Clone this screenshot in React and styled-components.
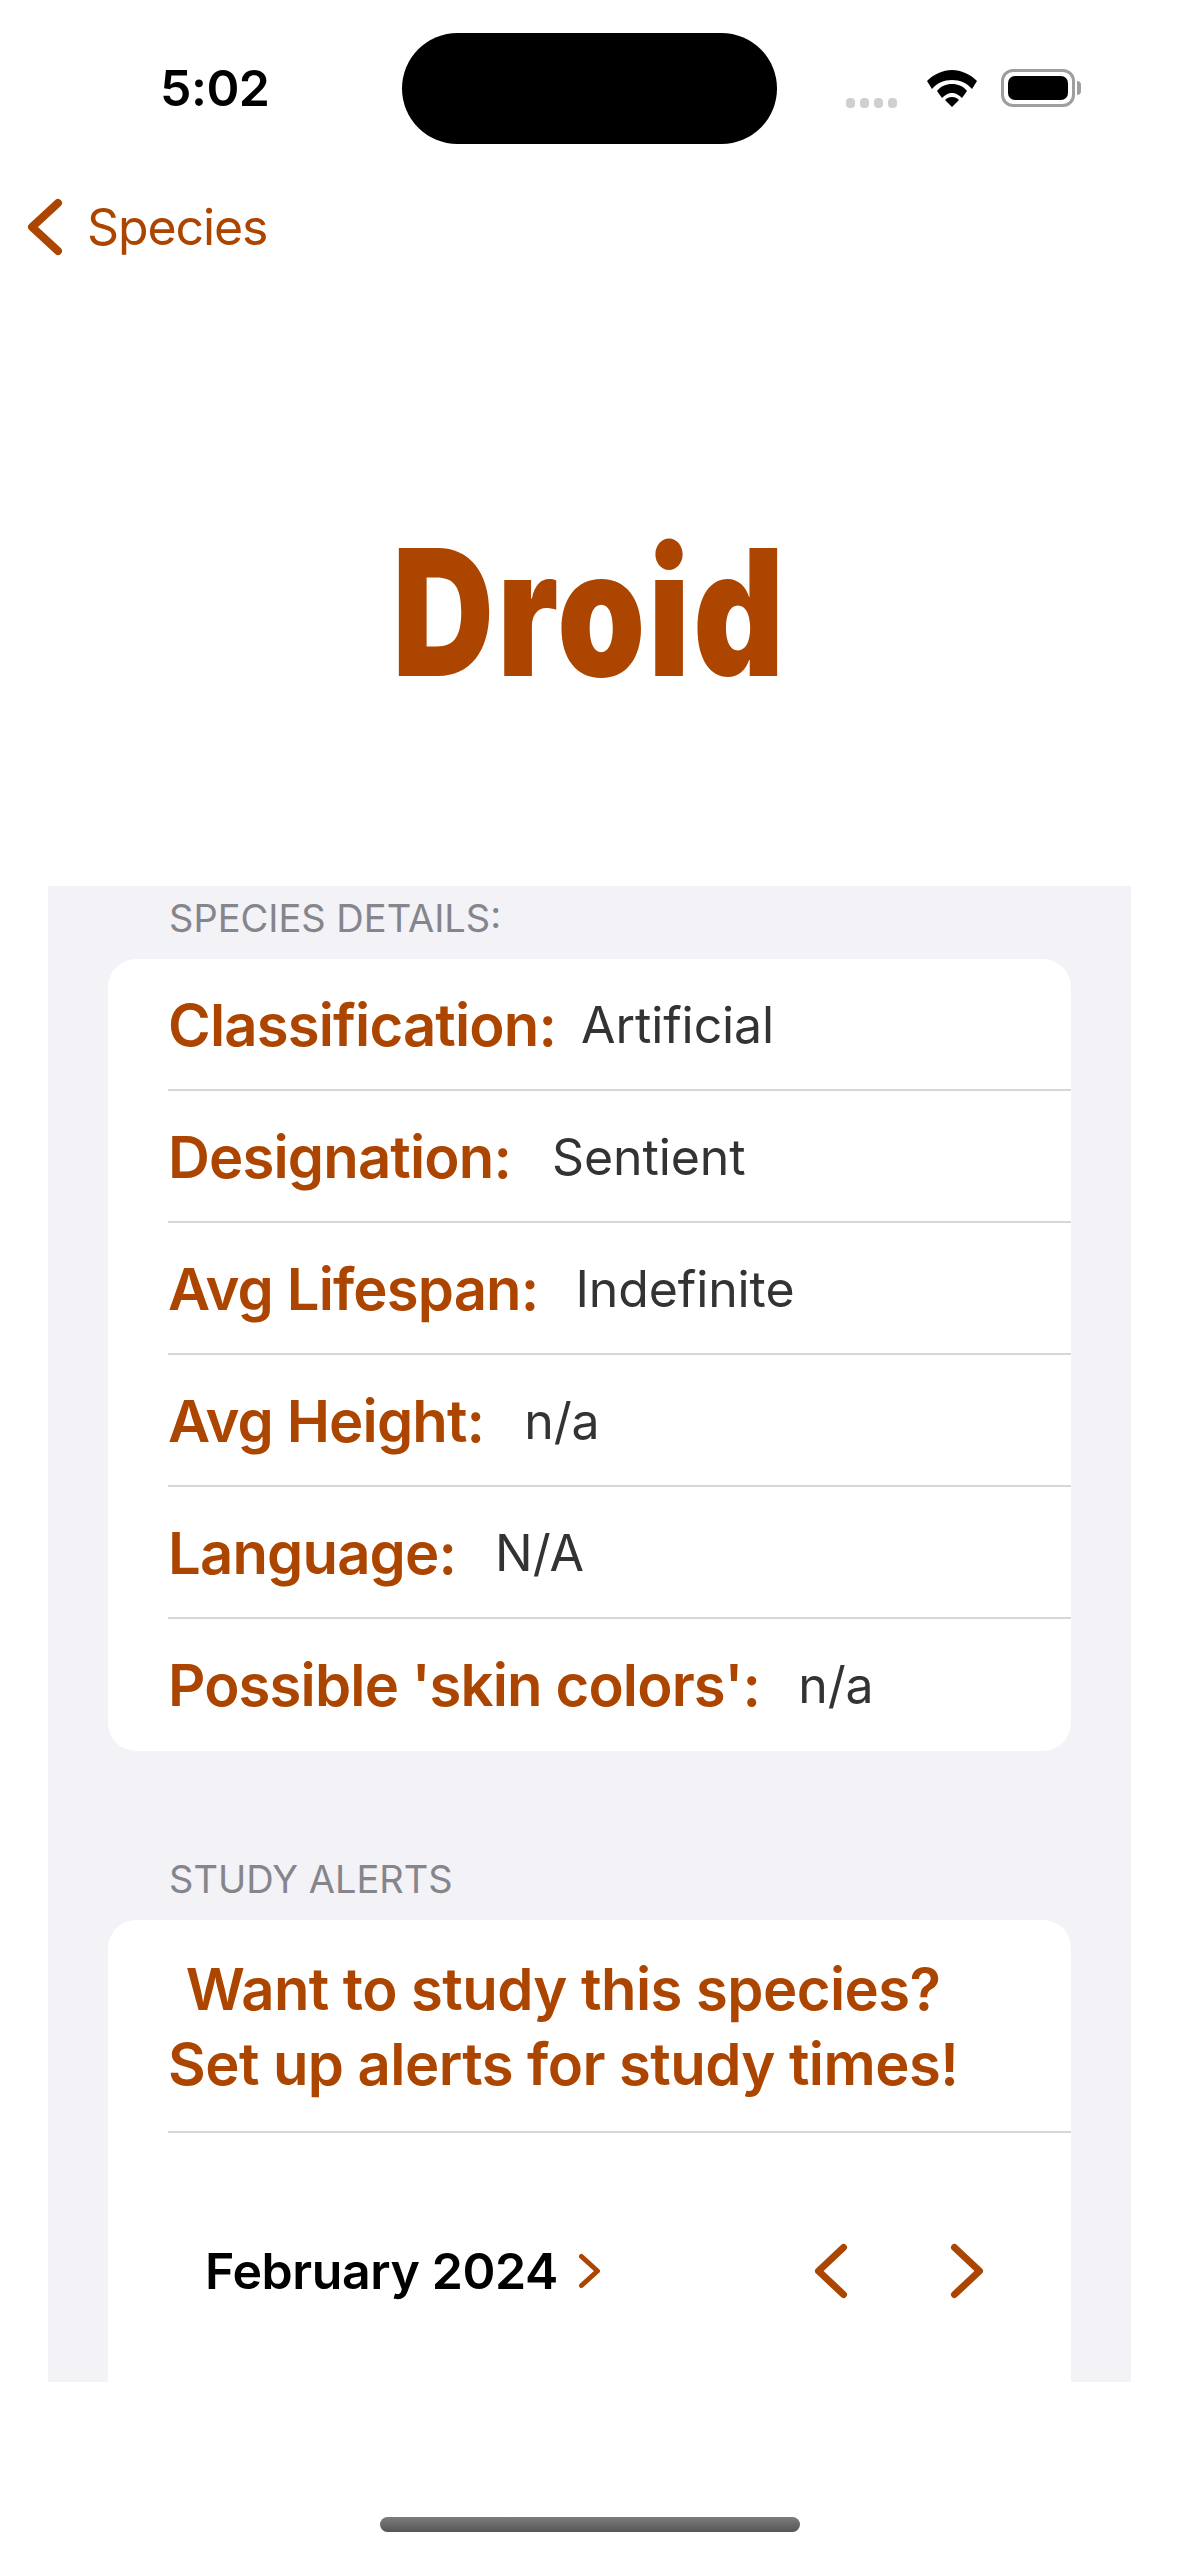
import React from 'react';
import styled, { createGlobalStyle } from 'styled-components';

const ACCENT = '#ab4500';

const DETAILS = [
    { label: 'Classification:', value: 'Artificial', gap: 25 },
    { label: 'Designation:', value: 'Sentient', gap: 41 },
    { label: 'Avg Lifespan:', value: 'Indefinite', gap: 37 },
    { label: 'Avg Height:', value: 'n/a', gap: 40 },
    { label: 'Language:', value: 'N/A', gap: 39 },
    { label: "Possible 'skin colors':", value: 'n/a', gap: 38 }
];

const GlobalStyle = createGlobalStyle`
  html, body {
    margin: 0;
    padding: 0;
    background: #ffffff;
  }
  body {
    font-family: Inter, "Liberation Sans", sans-serif;
  }
`;

const Chevron = ({ dir = 'left', size = 56, width = 34, stroke = 7 }) => (
    <svg width={width} height={size} viewBox={`0 0 ${width} ${size}`} fill="none">
        <path
            d={dir === 'left'
                ? `M${width - stroke / 2 - 1} ${stroke / 2 + 1} L${stroke / 2 + 1} ${size / 2} L${width - stroke / 2 - 1} ${size - stroke / 2 - 1}`
                : `M${stroke / 2 + 1} ${stroke / 2 + 1} L${width - stroke / 2 - 1} ${size / 2} L${stroke / 2 + 1} ${size - stroke / 2 - 1}`}
            stroke={ACCENT}
            strokeWidth={stroke}
            strokeLinecap="round"
            strokeLinejoin="round"
        />
    </svg>
);

const WifiIcon = () => (
    <svg width="50" height="37" viewBox="0 0 50 37">
        <path d="M25 0 C34 0 43 4 50 11 L45 19 C40 13 33 10 25 10 C17 10 10 13 5 19 L0 11 C7 4 16 0 25 0 Z" fill="#000" />
        <path d="M25 14 C31 14 36 16 40 21 L35 28 C32 25 29 23 25 23 C21 23 18 25 15 28 L10 21 C14 16 19 14 25 14 Z" fill="#000" />
        <path d="M25 27 C28 27 30 28 32 30 L25 37 L18 30 C20 28 22 27 25 27 Z" fill="#000" />
    </svg>
);

export default function App() {
    return (
        <Page>
            <GlobalStyle />
            <StatusBar>
                <Time>5:02</Time>
                <Island />
                <StatusIcons>
                    <SignalDots>
                        <Dot /><Dot /><Dot /><Dot />
                    </SignalDots>
                    <WifiIcon />
                    <Battery>
                        <BatteryFill />
                    </Battery>
                    <BatteryCap />
                </StatusIcons>
            </StatusBar>

            <NavBar>
                <Chevron dir="left" size={58} width={36} stroke={8} />
                <BackLabel>Species</BackLabel>
            </NavBar>

            <TitleWrap>
                <Title>Droid</Title>
            </TitleWrap>

            <Panel>
                <SectionHeader>SPECIES DETAILS:</SectionHeader>
                <Card>
                    {DETAILS.map((item) => (
                        <Row key={item.label}>
                            <RowContent $gap={item.gap}>
                                <RowLabel>{item.label}</RowLabel>
                                <RowValue>{item.value}</RowValue>
                            </RowContent>
                        </Row>
                    ))}
                </Card>

                <SectionHeader $spaced>STUDY ALERTS</SectionHeader>
                <Card>
                    <Prompt>
                        <PromptText>
                            Want to study this species?<br />
                            Set up alerts for study times!
                        </PromptText>
                    </Prompt>
                    <Calendar>
                        <MonthButton>
                            <MonthLabel>February 2024</MonthLabel>
                            <Chevron dir="right" size={36} width={23} stroke={5} />
                        </MonthButton>
                        <MonthArrows>
                            <Chevron dir="left" size={56} width={34} stroke={7} />
                            <Chevron dir="right" size={56} width={34} stroke={7} />
                        </MonthArrows>
                    </Calendar>
                </Card>
            </Panel>

            <Footer>
                <HomeIndicator />
            </Footer>
        </Page>
    );
}

const Page = styled.div`
  width: 1179px;
  height: 2556px;
  background: #ffffff;
  display: flex;
  flex-direction: column;
  overflow: hidden;
`;

const StatusBar = styled.div`
  height: 111px;
  padding-top: 33px;
  display: flex;
  align-items: flex-start;
  box-sizing: content-box;
`;

const Time = styled.span`
  width: 402px;
  padding-left: 160px;
  box-sizing: border-box;
  margin-top: 25px;
  font-size: 50px;
  line-height: 60px;
  font-weight: 600;
  color: #000;
  letter-spacing: -0.5px;
`;

const Island = styled.div`
  width: 375px;
  height: 111px;
  border-radius: 56px;
  background: #000;
`;

const StatusIcons = styled.div`
  margin-top: 35px;
  margin-left: 69px;
  display: flex;
  align-items: center;
  height: 40px;
`;

const SignalDots = styled.div`
  display: flex;
  gap: 5px;
  align-self: flex-end;
  margin-right: 30px;
`;

const Dot = styled.span`
  width: 9px;
  height: 10px;
  border-radius: 4px;
  background: #cfcfcf;
`;

const Battery = styled.div`
  width: 74px;
  height: 38px;
  margin-left: 24px;
  padding: 4px;
  box-sizing: border-box;
  border: 3px solid #9e9e9e;
  border-radius: 12px;
`;

const BatteryFill = styled.div`
  height: 100%;
  border-radius: 7px;
  background: #000;
`;

const BatteryCap = styled.div`
  width: 4px;
  height: 14px;
  margin-left: 2px;
  border-radius: 0 4px 4px 0;
  background: #9e9e9e;
`;

const NavBar = styled.div`
  height: 58px;
  margin-top: 54px;
  padding-left: 27px;
  display: flex;
  align-items: center;
  gap: 24px;
`;

const BackLabel = styled.span`
  font-size: 50px;
  line-height: 58px;
  font-weight: 400;
  color: ${ACCENT};
  letter-spacing: -1.1px;
`;

const TitleWrap = styled.div`
  height: 630px;
  padding-top: 256px;
  box-sizing: border-box;
  display: flex;
  justify-content: center;
  align-items: flex-start;
`;

const Title = styled.h1`
  margin: 0;
  font-size: 176px;
  line-height: 200px;
  font-weight: 900;
  color: ${ACCENT};
  letter-spacing: 4px;
  transform: scaleX(0.8);
`;

const Panel = styled.section`
  margin: 0 48px;
  height: 1496px;
  flex: none;
  background: #f2f2f7;
  overflow: hidden;
`;

const SectionHeader = styled.div`
  height: 73px;
  margin-top: ${(props) => (props.$spaced ? '96px' : '0')};
  padding-left: 121px;
  padding-top: 10px;
  box-sizing: border-box;
  font-size: 38px;
  line-height: 44px;
  font-weight: 400;
  color: #85858b;
  letter-spacing: 0;
`;

const Card = styled.div`
  margin: 0 60px;
  background: #ffffff;
  border-radius: 28px;
  overflow: hidden;
`;

const Row = styled.div`
  padding-left: 60px;
`;

const RowContent = styled.div`
  height: 132px;
  padding-top: 2px;
  display: flex;
  align-items: center;
  gap: ${(props) => props.$gap}px;
  box-sizing: border-box;
  border-bottom: 2px solid #d6d6d9;
  ${Row}:last-child & {
    border-bottom: none;
    padding-top: 0;
  }
`;

const RowLabel = styled.span`
  font-size: 58px;
  line-height: 70px;
  font-weight: 600;
  color: ${ACCENT};
  letter-spacing: -0.85px;
`;

const RowValue = styled.span`
  font-size: 50px;
  line-height: 60px;
  font-weight: 400;
  color: #333333;
  letter-spacing: -0.1px;
`;

const Prompt = styled.div`
  margin-left: 60px;
  height: 213px;
  box-sizing: border-box;
  padding-top: 32px;
  border-bottom: 2px solid #d6d6d9;
`;

const PromptText = styled.div`
  display: inline-block;
  text-align: center;
  font-size: 58px;
  line-height: 75px;
  font-weight: 600;
  color: ${ACCENT};
  letter-spacing: -0.55px;
`;

const Calendar = styled.div`
  height: 278px;
  padding: 110px 87px 0 97px;
  box-sizing: border-box;
  display: flex;
  align-items: flex-start;
  justify-content: space-between;
`;

const MonthButton = styled.div`
  display: flex;
  align-items: center;
  gap: 20px;
  height: 56px;
`;

const MonthLabel = styled.span`
  font-size: 50px;
  line-height: 56px;
  font-weight: 600;
  color: #000;
  letter-spacing: -0.4px;
`;

const MonthArrows = styled.div`
  display: flex;
  gap: 102px;
`;

const Footer = styled.div`
  flex: 1;
  display: flex;
  justify-content: center;
  padding-top: 135px;
`;

const HomeIndicator = styled.div`
  width: 420px;
  height: 15px;
  border-radius: 8px;
  background: linear-gradient(#7d7d7d, #555555);
`;
